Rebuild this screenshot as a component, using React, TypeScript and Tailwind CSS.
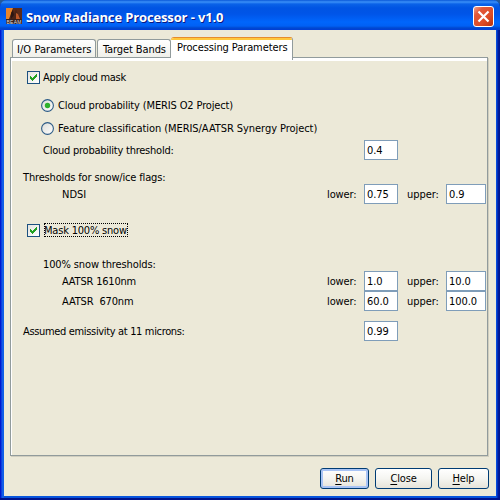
import type { ReactNode } from "react";

function Check() {
  return (
    <span className="flex h-[13px] w-[13px] shrink-0 items-center justify-center border border-[#1c5180] bg-gradient-to-br from-[#e4e4df] to-white">
      <svg width="11" height="11" viewBox="0 0 11 11" shapeRendering="crispEdges">
        <path d="M2 4h1v1h1v1h1v-1h1v-1h1v-1h1v-1h1v3h-1v1h-1v1h-1v1h-1v1h-1v-1h-1v-1h-1z" fill="#21a121" />
      </svg>
    </span>
  );
}

function Radio({ on = false }: { on?: boolean }) {
  return (
    <svg className="shrink-0" width="13" height="13" viewBox="0 0 13 13">
      <defs>
        <linearGradient id="radioFill" x1="0" y1="0" x2="1" y2="1">
          <stop offset="0" stopColor="#dcdcd7" />
          <stop offset="1" stopColor="#ffffff" />
        </linearGradient>
      </defs>
      <circle cx="6.5" cy="6.5" r="5.9" fill="url(#radioFill)" stroke="#2b5a86" strokeWidth="1.1" />
      {on && <circle cx="6.5" cy="6.5" r="2.7" fill="#2eb02c" />}
    </svg>
  );
}

function Label({ className = "", children }: { className?: string; children: ReactNode }) {
  return <span className={`shrink-0 pt-[2px] ${className}`}>{children}</span>;
}

function Field({ value, className }: { value: string; className: string }) {
  return (
    <span className={`flex h-5 shrink-0 items-center border border-[#7f9db9] bg-white pl-[2px] ${className}`}>
      <Label className="tracking-[-0.05px]">{value}</Label>
    </span>
  );
}

function Limits({ lower, upper }: { lower: string; upper: string }) {
  return (
    <>
      <Label className="w-[37px] tracking-[-0.1px]">lower:</Label>
      <Field value={lower} className="w-[34px]" />
      <Label className="ml-[9px] w-[39px] tracking-[-0.05px]">upper:</Label>
      <Field value={upper} className="w-10" />
    </>
  );
}

function Row({ className = "", children }: { className?: string; children: ReactNode }) {
  return <div className={`flex items-center ${className}`}>{children}</div>;
}

function Button({ hot, rest, className }: { hot: string; rest: string; className: string }) {
  return (
    <button
      className={`flex h-[21px] items-center justify-center rounded-[3px] border border-[#003c74] bg-gradient-to-b from-white via-[#f5f5f1] to-[#e6e3d9] ${className}`}
    >
      <span className="tracking-[-0.15px]">
        <span className="underline underline-offset-2">{hot}</span>
        {rest}
      </span>
    </button>
  );
}

export default function App() {
  return (
    <div className="h-[500px] w-[500px] overflow-hidden bg-[#245a9a] font-['DejaVu_Sans_Condensed','DejaVu_Sans',sans-serif] text-[11px] leading-[14px] whitespace-pre text-black [font-stretch:condensed]">
      <div className="flex h-full flex-col rounded-t-[7px] bg-[linear-gradient(90deg,#0019cf_0,#0019cf_1px,#0831d9_1px,#166aee_3px,#0855dd_4px,#0855dd_496px,#0441d8_497px,#001ea0_498px,#00138c_500px)]">
        <header className="flex h-[30px] shrink-0 items-center rounded-t-[7px] bg-[linear-gradient(180deg,#0958d8_0,#3a90f8_2px,#0a62e8_4px,#0054e3_8px,#0055e8_14px,#0066fc_22px,#0060f5_26px,#0048d0_28px,#003dd7_30px)] pt-[3px] pr-[6px] pl-[6px]">
          <svg className="-mt-[1px] shrink-0" width="16" height="16" viewBox="0 0 16 16">
            <rect width="16" height="16" fill="#4a2417" />
            <path d="M0 0h7L3 11H0z" fill="#e8842a" />
            <path d="M7 0h9v12l-4-6-2-5-3 7z" fill="#5a2a18" />
            <path d="M10 5l2 1 2 5h-4z" fill="#bd5828" />
            <path d="M5 5l2-3 1 5-3 4z" fill="#2b1613" />
            <rect y="11" width="16" height="5" fill="#2a1c20" fillOpacity=".6" />
            <text x="0.5" y="15.5" fontSize="5" textLength="15" fill="#ddd" fontFamily="Liberation Sans, sans-serif">BEAM</text>
          </svg>
          <h1 className="ml-[4px] font-['Open_Sans','Noto_Sans',sans-serif] text-[13px] leading-4 font-bold tracking-[-0.13px] text-white [font-stretch:normal] [text-shadow:1px_1px_0_#0a1883]">
            Snow Radiance Processor - v1.0
          </h1>
          <button className="ml-auto flex h-[21px] w-[21px] items-center justify-center rounded-[3px] border border-white bg-[linear-gradient(135deg,#f0a28c_0%,#e2583a_25%,#dd4c26_65%,#b8320e_100%)]">
            <svg width="13" height="13" viewBox="0 0 13 13">
              <path d="M1.5 1.5l10 10M11.5 1.5l-10 10" stroke="white" strokeWidth="2.2" />
            </svg>
          </button>
        </header>

        <div className="flex min-h-0 grow flex-col border-b-2 border-[#00138c]">
          <main className="mr-1 mb-[2px] ml-1 flex min-h-0 grow flex-col bg-[#ece9d8] pr-[12px] pl-[6px]">
            <nav className="relative z-10 mt-[7px] -mb-[3px] flex h-[23px] shrink-0 items-start pl-[2px]">
              <div className="mt-[2px] flex h-[18px] w-[84px] items-center rounded-t-[3px] border border-b-0 border-[#919b9c] bg-gradient-to-b from-white to-[#f0f0ea] pl-1">
                <Label className="tracking-[0.05px]">I/O Parameters</Label>
              </div>
              <div className="mt-[2px] ml-[1px] flex h-[18px] w-[74px] items-center rounded-t-[3px] border border-b-0 border-[#919b9c] bg-gradient-to-b from-white to-[#f0f0ea] pl-[5px]">
                <Label className="tracking-[-0.1px]">Target Bands</Label>
              </div>
              <div className="h-[23px] w-[122px] overflow-hidden rounded-t-[3px] border-t border-r border-t-[#e68b2c] border-r-[#919b9c] bg-white">
                <div className="h-[2px] bg-[#ffc73c]" />
                <div className="pt-[1px] pl-[6px] leading-[14px] tracking-[-0.1px]">Processing Parameters</div>
              </div>
            </nav>

            <section className="h-[399px] w-[478px] shrink-0 border border-[#919b9c] bg-[#ece9d8] shadow-[1px_1px_0_#d0cebf]">
              <div className="h-full border-t-[3px] border-l border-white pt-[6px] pl-[11px]">
                <Row className="h-5 pl-1">
                  <Check />
                  <Label className="ml-[3px] tracking-[-0.3px]">Apply cloud mask</Label>
                </Row>
                <Row className="mt-2 h-5 pl-[18px]">
                  <Radio on />
                  <Label className="ml-1 tracking-[-0.14px]">Cloud probability (MERIS O2 Project)</Label>
                </Row>
                <Row className="mt-[3px] h-5 pl-[18px]">
                  <Radio />
                  <Label className="ml-1 tracking-[-0.06px]">Feature classification (MERIS/AATSR Synergy Project)</Label>
                </Row>
                <Row className="mt-[2px] h-5 pl-5">
                  <Label className="w-[321px] tracking-[-0.24px]">Cloud probability threshold:</Label>
                  <Field value="0.4" className="w-[34px]" />
                </Row>
                <Row className="mt-[10px] h-[14px]">
                  <Label className="tracking-[-0.16px]">Thresholds for snow/ice flags:</Label>
                </Row>
                <Row className="h-5 pl-[39px]">
                  <Label className="w-[265px]">NDSI</Label>
                  <Limits lower="0.75" upper="0.9" />
                </Row>
                <Row className="mt-4 h-5 pl-1">
                  <Check />
                  <span className="ml-1 flex h-[14px] w-[84px] items-center overflow-hidden border border-dotted border-black">
                    <Label className="-ml-px tracking-[-0.2px]">Mask 100% snow</Label>
                  </span>
                </Row>
                <Row className="mt-[17px] h-[14px] pl-5">
                  <Label className="tracking-[-0.12px]">100% snow thresholds:</Label>
                </Row>
                <Row className="h-5 pl-[39px]">
                  <Label className="w-[265px] tracking-[-0.2px]">AATSR 1610nm</Label>
                  <Limits lower="1.0" upper="10.0" />
                </Row>
                <Row className="h-5 pl-[39px]">
                  <Label className="w-[265px] tracking-[-0.15px]">AATSR  670nm</Label>
                  <Limits lower="60.0" upper="100.0" />
                </Row>
                <Row className="mt-[10px] h-5">
                  <Label className="w-[341px] tracking-[-0.34px]">Assumed emissivity at 11 microns:</Label>
                  <Field value="0.99" className="w-[34px]" />
                </Row>
              </div>
            </section>

            <footer className="mt-3 -mr-[5px] flex shrink-0 justify-end gap-[6px]">
              <Button hot="R" rest="un" className="w-[49px] shadow-[inset_0_0_0_2px_#a9c4f5]" />
              <Button hot="C" rest="lose" className="w-[57px]" />
              <Button hot="H" rest="elp" className="w-[51px]" />
            </footer>
          </main>
        </div>
      </div>
    </div>
  );
}
